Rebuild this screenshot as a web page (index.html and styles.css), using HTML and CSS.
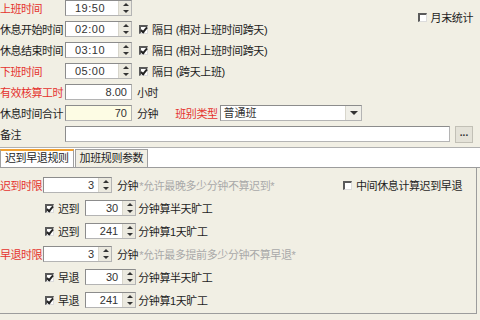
FILE: index.html
```html
<!DOCTYPE html>
<html lang="zh-CN">
<head>
    <meta charset="UTF-8">
    <title>班次设置</title>
    <link rel="stylesheet" href="styles.css">
</head>
<body>
    <div class="form">
        <div class="top">
            <div class="col">
                <div class="row">
                    <span class="lbl red">上班时间</span>
                    <span class="field time"><span class="val mid">19:50</span><span class="spin"></span></span>
                </div>
                <div class="row">
                    <span class="lbl">休息开始时间</span>
                    <span class="field time"><span class="val mid">02:00</span><span class="spin"></span></span>
                    <span class="cb on"></span><span class="txt">隔日 (相对上班时间跨天)</span>
                </div>
                <div class="row">
                    <span class="lbl">休息结束时间</span>
                    <span class="field time"><span class="val mid">03:10</span><span class="spin"></span></span>
                    <span class="cb on"></span><span class="txt">隔日 (相对上班时间跨天)</span>
                </div>
                <div class="row">
                    <span class="lbl red">下班时间</span>
                    <span class="field time"><span class="val mid">05:00</span><span class="spin"></span></span>
                    <span class="cb on"></span><span class="txt">隔日 (跨天上班)</span>
                </div>
            </div>
            <div class="month">
                <span class="cb"></span><span class="txt">月末统计</span>
            </div>
        </div>
        <div class="row">
            <span class="lbl red">有效核算工时</span>
            <span class="field time"><span class="val">8.00</span></span>
            <span class="unit">小时</span>
        </div>
        <div class="row">
            <span class="lbl">休息时间合计</span>
            <span class="field time total"><span class="val">70</span></span>
            <span class="unit">分钟</span>
            <span class="red kind">班别类型</span>
            <span class="field select"><span class="val left">普通班</span><span class="drop"></span></span>
        </div>
        <div class="row">
            <span class="lbl">备注</span>
            <span class="field note"></span>
            <span class="btn">...</span>
        </div>
    </div>

    <div class="tabs">
        <span class="tab on">迟到早退规则</span>
        <span class="tab">加班规则参数</span>
    </div>

    <div class="panel">
        <div class="row">
            <span class="lbl short red">迟到时限</span>
            <span class="field limit"><span class="val">3</span><span class="spin"></span></span>
            <span class="unit">分钟</span>
            <span class="hint">*允许最晚多少分钟不算迟到*</span>
            <span class="right"><span class="cb"></span><span class="txt">中间休息计算迟到早退</span></span>
        </div>
        <div class="row sub">
            <span class="cb on"></span><span class="name">迟到</span>
            <span class="field num"><span class="val">30</span><span class="spin"></span></span>
            <span class="after">分钟算半天旷工</span>
        </div>
        <div class="row sub">
            <span class="cb on"></span><span class="name">迟到</span>
            <span class="field num"><span class="val">241</span><span class="spin"></span></span>
            <span class="after">分钟算1天旷工</span>
        </div>
        <div class="row">
            <span class="lbl short red">早退时限</span>
            <span class="field limit"><span class="val">3</span><span class="spin"></span></span>
            <span class="unit">分钟</span>
            <span class="hint">*允许最多提前多少分钟不算早退*</span>
        </div>
        <div class="row sub">
            <span class="cb on"></span><span class="name">早退</span>
            <span class="field num"><span class="val">30</span><span class="spin"></span></span>
            <span class="after">分钟算半天旷工</span>
        </div>
        <div class="row sub">
            <span class="cb on"></span><span class="name">早退</span>
            <span class="field num"><span class="val">241</span><span class="spin"></span></span>
            <span class="after">分钟算1天旷工</span>
        </div>
    </div>
</body>
</html>
```

FILE: styles.css
```css
* { box-sizing: border-box; }
body {
    margin: 0;
    width: 480px;
    height: 320px;
    overflow: hidden;
    background: #f1efe4;
    font: 11px "Liberation Sans", "Noto Sans CJK SC", sans-serif;
    color: #1e1e1e;
}
.form {
    display: flex;
    flex-direction: column;
    gap: 5px;
}
.top { display: flex; }
.col {
    display: flex;
    flex-direction: column;
    gap: 5px;
}
.month {
    display: flex;
    align-items: center;
    margin-left: auto;
    padding: 10px 7px 0 0;
    height: 24px;
}
.row {
    display: flex;
    align-items: center;
    height: 16px;
    white-space: nowrap;
}
.lbl {
    width: 65px;
    flex: none;
    letter-spacing: -0.5px;
}
.lbl.short { width: 43px; }
.red { color: #e5332e; }
.txt, .unit, .kind, .after, .hint, .name { letter-spacing: -0.4px; }

.field {
    display: flex;
    height: 16px;
    background: #fff;
    border: 1px solid #b4b4b4;
    border-top-color: #8c8c8c;
    border-left-color: #8c8c8c;
    flex: none;
}
.val {
    flex: 1;
    text-align: right;
    padding-right: 4px;
    line-height: 14px;
    color: #333;
}
.val.mid { text-align: center; letter-spacing: 0.5px; }
.val.left { text-align: left; padding-left: 3px; }
.field.time { width: 67px; }
.field.total { background: #fdfce4; }
.field.select { width: 142px; margin-left: 2px; }
.field.note { width: 385px; }
.field.limit { width: 69px; }
.field.num { width: 51px; }

.spin, .drop {
    width: 13px;
    flex: none;
    background: #ebe9df;
    border-left: 1px solid #d8d6cc;
    position: relative;
}
.spin::before, .spin::after {
    content: "";
    position: absolute;
    left: 4px;
    border-left: 3px solid transparent;
    border-right: 3px solid transparent;
}
.spin::before { top: 2px; border-bottom: 3px solid #333; }
.spin::after { bottom: 2px; border-top: 3px solid #333; }
.drop { width: 16px; background: #f0efe8; }
.drop::after {
    content: "";
    position: absolute;
    left: 4px;
    top: 5px;
    border-left: 4px solid transparent;
    border-right: 4px solid transparent;
    border-top: 4px solid #333;
}

.cb {
    width: 9px;
    height: 9px;
    flex: none;
    background: #fff;
    border-top: 2px solid #5a5a5a;
    border-left: 2px solid #5a5a5a;
    border-right: 1px solid #dcdcdc;
    border-bottom: 1px solid #dcdcdc;
    margin-right: 4px;
    position: relative;
}
.cb.on::after {
    content: "";
    position: absolute;
    left: 1px;
    top: -1px;
    width: 2px;
    height: 5px;
    border-right: 2px solid #222;
    border-bottom: 2px solid #222;
    transform: rotate(40deg);
}
.row > .field.time + .cb { margin-left: 7px; }
.unit { margin-left: 5px; }
.kind { margin-left: 17px; }
.btn {
    width: 18px;
    height: 17px;
    margin-left: 5px;
    background: #e4e2d8;
    border: 1px solid #c2c0b6;
    font-size: 10px;
    font-weight: bold;
    text-align: center;
    line-height: 12px;
    color: #333;
}

.tabs {
    display: flex;
    align-items: flex-end;
    margin-top: 5px;
    height: 21px;
    background: #fff;
    border-top: 1px solid #b0b0b0;
    border-bottom: 1px solid #9c9c9c;
}
.tab {
    height: 18px;
    padding: 0 4px;
    margin-right: 1px;
    line-height: 16px;
    letter-spacing: -0.4px;
    border: 1px solid #a0a0a0;
    border-bottom: none;
    background: #f1efe4;
}
.tab.on {
    background: #fff;
    border-top: 2px solid #f0a030;
    line-height: 15px;
}

.panel {
    height: 146px;
    padding-top: 9px;
    display: flex;
    flex-direction: column;
    gap: 7px;
    border-right: 1px solid #9c9c9c;
    border-bottom: 1px solid #9c9c9c;
    width: 477px;
}
.hint {
    color: #a9a9a9;
    margin-left: 1px;
}
.right {
    display: flex;
    align-items: center;
    margin-left: auto;
    padding-right: 14px;
}
.sub { padding-left: 45px; }
.name { margin-right: 6px; }
.after { margin-left: 2px; }
```
